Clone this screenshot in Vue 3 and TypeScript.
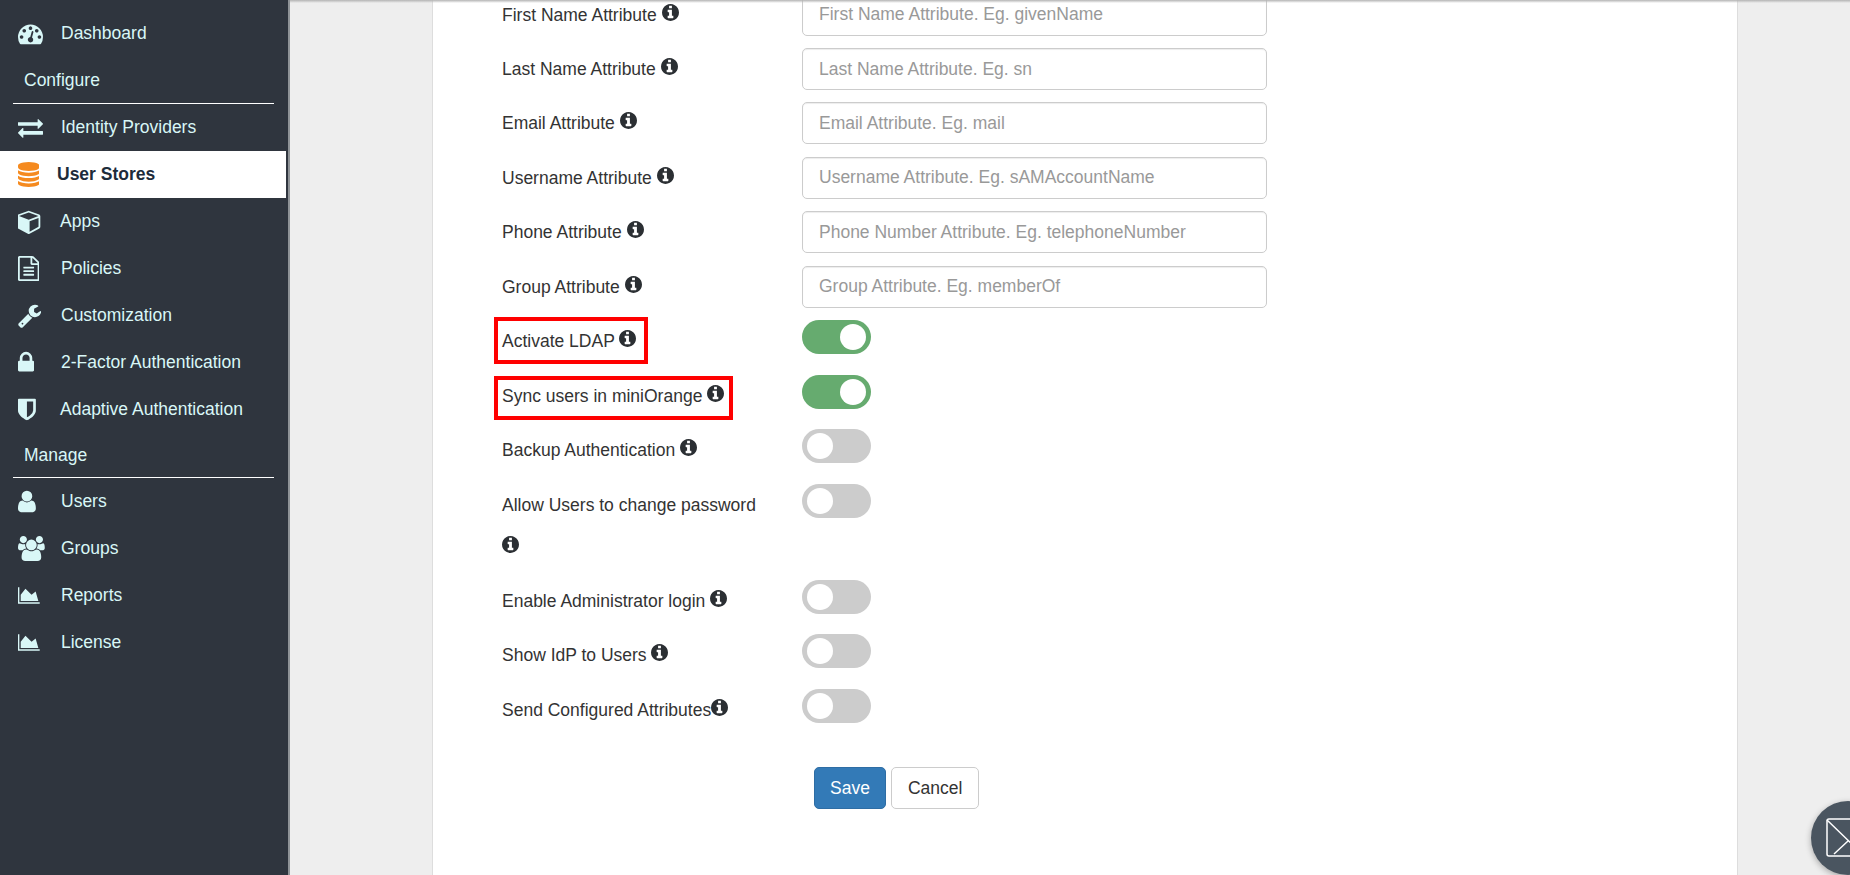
<script setup lang="ts">
import { reactive } from 'vue'

interface NavIcon { d: string; x: number; w: number; h?: number; color?: string }
interface NavItem { label: string; icon: NavIcon; cls?: string }

const I = {
  dash: { x: 0, w: 1792, d: 'M384 1152q0-53-37.5-90.5t-90.5-37.5-90.5 37.5-37.5 90.5 37.5 90.5 90.5 37.5 90.5-37.5 37.5-90.5zm192-448q0-53-37.5-90.5t-90.5-37.5-90.5 37.5-37.5 90.5 37.5 90.5 90.5 37.5 90.5-37.5 37.5-90.5zm428 481l101-382q6-26-7.5-48.5t-38.5-29.5-48 6.5-30 39.5l-101 382q-60 5-107 43.5t-63 98.5q-20 77 20 146t117 89 146-20 89-117q16-60-6-117t-72-91zm660-33q0-53-37.5-90.5t-90.5-37.5-90.5 37.5-37.5 90.5 37.5 90.5 90.5 37.5 90.5-37.5 37.5-90.5zm-640-640q0-53-37.5-90.5t-90.5-37.5-90.5 37.5-37.5 90.5 37.5 90.5 90.5 37.5 90.5-37.5 37.5-90.5zm448 192q0-53-37.5-90.5t-90.5-37.5-90.5 37.5-37.5 90.5 37.5 90.5 90.5 37.5 90.5-37.5 37.5-90.5zm320 448q0 261-141 483-19 29-54 29h-1402q-35 0-54-29-141-221-141-483 0-182 71-348t191-286 286-191 348-71 348 71 286 191 191 286 71 348z' },
  exchange: { x: 0, w: 1792, d: 'M1792 1184v192q0 13-9.5 22.5t-22.5 9.5h-1376v192q0 13-9.5 22.5t-22.5 9.5q-12 0-24-10l-319-320q-9-9-9-22 0-14 9-23l320-320q9-9 23-9 13 0 22.5 9.5t9.5 22.5v192h1376q13 0 22.5 9.5t9.5 22.5zm0-544q0 14-9 23l-320 320q-9 9-23 9-13 0-22.5-9.5t-9.5-22.5v-192h-1376q-13 0-22.5-9.5t-9.5-22.5v-192q0-13 9.5-22.5t22.5-9.5h1376v-192q0-14 9-23t23-9q12 0 24 10l319 319q9 9 9 23z' },
  db: { x: 0, w: 1536, color: '#f58a1f', d: 'M768 768q237 0 443-43t325-127v170q0 69-103 128t-280 93.5-385 34.5-385-34.5-280-93.5-103-128v-170q119 84 325 127t443 43zm0 768q237 0 443-43t325-127v170q0 69-103 128t-280 93.5-385 34.5-385-34.5-280-93.5-103-128v-170q119 84 325 127t443 43zm0-384q237 0 443-43t325-127v170q0 69-103 128t-280 93.5-385 34.5-385-34.5-280-93.5-103-128v-170q119 84 325 127t443 43zm0-1152q208 0 385 34.5t280 93.5 103 128v128q0 69-103 128t-280 93.5-385 34.5-385-34.5-280-93.5-103-128v-128q0-69 103-128t280-93.5 385-34.5z' },
  cube: { x: 64, w: 1664, d: 'M896 1629l640-349v-636l-640 233v752zm-64-865l698-254-698-254-698 254zm832-252v768q0 35-18 65t-49 47l-704 384q-28 16-61 16t-61-16l-704-384q-31-17-49-47t-18-65v-768q0-40 23-73t61-47l704-256q22-8 44-8t44 8l704 256q38 14 61 47t23 73z' },
  file: { x: 128, w: 1536, d: 'M1596 380q28 28 48 76t20 88v1152q0 40-28 68t-68 28h-1344q-40 0-68-28t-28-68v-1600q0-40 28-68t68-28h896q40 0 88 20t76 48zm-444-244v376h376q-10-29-22-41l-313-313q-12-12-41-22zm384 1528v-1024h-416q-40 0-68-28t-28-68v-416h-768v1536h1280zm-1024-864q0-14 9-23t23-9h704q14 0 23 9t9 23v64q0 14-9 23t-23 9h-704q-14 0-23-9t-9-23v-64zm736 224q14 0 23 9t9 23v64q0 14-9 23t-23 9h-704q-14 0-23-9t-9-23v-64q0-14 9-23t23-9h704zm0 256q14 0 23 9t9 23v64q0 14-9 23t-23 9h-704q-14 0-23-9t-9-23v-64q0-14 9-23t23-9h704z' },
  wrench: { x: 64, w: 1664, d: 'M448 1472q0-26-19-45t-45-19-45 19-19 45 19 45 45 19 45-19 19-45zm644-420l-682 682q-37 37-90 37-52 0-91-37l-106-108q-38-36-38-90 0-53 38-91l681-681q39 98 114.5 173.5t173.5 114.5zm634-435q0 39-23 106-47 134-164.5 217.5t-258.5 83.5q-185 0-316.5-131.5t-131.5-316.5 131.5-316.5 316.5-131.5q58 0 121.5 16.5t107.5 46.5q16 11 16 28t-16 28l-293 169v224l193 107q5-3 79-48.5t135.5-81 70.5-35.5q15 0 23.5 10t8.5 25z' },
  lock: { x: 320, w: 1152, d: 'M640 768h512v-192q0-106-75-181t-181-75-181 75-75 181v192zm832 96v576q0 40-28 68t-68 28h-960q-40 0-68-28t-28-68v-576q0-40 28-68t68-28h32v-192q0-184 132-316t316-132 316 132 132 316v192h32q40 0 68 28t28 68z' },
  shield: { x: 256, w: 1280, d: 'M1344 960v-640h-448v1137q119-63 213-137 235-184 235-360zm192-768v768q0 86-33.5 170.5t-83 150-118 127.5-126.5 103-121 77.5-89.5 49.5-42.5 20q-12 6-26 6t-26-6q-16-7-42.5-20t-89.5-49.5-121-77.5-126.5-103-118-127.5-83-150-33.5-170.5v-768q0-26 19-45t45-19h1152q26 0 45 19t19 45z' },
  user: { x: 256, w: 1280, d: 'M1536 1399q0 109-62.5 187t-150.5 78h-854q-88 0-150.5-78t-62.5-187q0-85 8.5-160.5t31.5-152 58.5-131 94-89 134.5-34.5q131 128 313 128t313-128q76 0 134.5 34.5t94 89 58.5 131 31.5 152 8.5 160.5zm-256-887q0 159-112.5 271.5t-271.5 112.5-271.5-112.5-112.5-271.5 112.5-271.5 271.5-112.5 271.5 112.5 112.5 271.5z' },
  users: { x: 0, w: 1920, d: 'M593 896q-162 5-265 128h-134q-82 0-138-40.5t-56-118.5q0-353 124-353 6 0 43.5 21t97.5 42.5 119 21.5q67 0 133-23-5 37-5 66 0 139 81 256zm1071 637q0 120-73 189.5t-194 69.5h-874q-121 0-194-69.5t-73-189.5q0-53 3.5-103.5t14-109 26.5-108.5 43-97.5 62-81 85.5-53.5 111.5-20q10 0 43 21.5t73 48 107 48 135 21.5 135-21.5 107-48 73-48 43-21.5q61 0 111.5 20t85.5 53.5 62 81 43 97.5 26.5 108.5 14 109 3.5 103.5zm-1024-1277q0 106-75 181t-181 75-181-75-75-181 75-181 181-75 181 75 75 181zm704 384q0 159-112.5 271.5t-271.5 112.5-271.5-112.5-112.5-271.5 112.5-271.5 271.5-112.5 271.5 112.5 112.5 271.5zm576 225q0 78-56 118.5t-138 40.5h-134q-103-123-265-128 81-117 81-256 0-29-5-66 66 23 133 23 59 0 119-21.5t97.5-42.5 43.5-21q124 0 124 353zm-128-609q0 106-75 181t-181 75-181-75-75-181 75-181 181-75 181 75 75 181z' },
  chart: { x: 0, w: 2048, h: 19, d: 'M2048 1536v128h-2048v-1536h128v1408h1920zm-384-1024l256 896h-1664v-576l448-576 576 576z' },
} satisfies Record<string, NavIcon>

const infoPath = 'M1152 1376v-160q0-14-9-23t-23-9h-96v-512q0-14-9-23t-23-9h-320q-14 0-23 9t-9 23v160q0 14 9 23t23 9h96v320h-96q-14 0-23 9t-9 23v160q0 14 9 23t23 9h448q14 0 23-9t9-23zm-128-896v-160q0-14-9-23t-23-9h-192q-14 0-23 9t-9 23v160q0 14 9 23t23 9h192q14 0 23-9t9-23zm640 416q0 209-103 385.5t-279.5 279.5-385.5 103-385.5-103-279.5-279.5-103-385.5 103-385.5 279.5-279.5 385.5-103 385.5 103 279.5 279.5 103 385.5z'

const top: NavItem[] = [{ label: 'Dashboard', icon: I.dash }]
const configure: NavItem[] = [
  { label: 'Identity Providers', icon: I.exchange },
  { label: 'User Stores', icon: I.db, cls: 'active' },
  { label: 'Apps', icon: I.cube, cls: 'tight' },
  { label: 'Policies', icon: I.file },
  { label: 'Customization', icon: I.wrench },
  { label: '2-Factor Authentication', icon: I.lock },
  { label: 'Adaptive Authentication', icon: I.shield, cls: 'tight' },
]
const manage: NavItem[] = [
  { label: 'Users', icon: I.user },
  { label: 'Groups', icon: I.users },
  { label: 'Reports', icon: I.chart },
  { label: 'License', icon: I.chart },
]

const inputs = [
  { label: 'First Name Attribute', ph: 'First Name Attribute. Eg. givenName' },
  { label: 'Last Name Attribute', ph: 'Last Name Attribute. Eg. sn' },
  { label: 'Email Attribute', ph: 'Email Attribute. Eg. mail' },
  { label: 'Username Attribute', ph: 'Username Attribute. Eg. sAMAccountName' },
  { label: 'Phone Attribute', ph: 'Phone Number Attribute. Eg. telephoneNumber' },
  { label: 'Group Attribute', ph: 'Group Attribute. Eg. memberOf' },
]

interface Toggle { label: string; on: boolean; mark?: string; tight?: boolean }
const toggles = reactive<Toggle[]>([
  { label: 'Activate LDAP', on: true, mark: 'mark-ldap' },
  { label: 'Sync users in miniOrange', on: true, mark: 'mark-sync' },
  { label: 'Backup Authentication', on: false },
  { label: 'Allow Users to change password', on: false },
  { label: 'Enable Administrator login', on: false },
  { label: 'Show IdP to Users', on: false },
  { label: 'Send Configured Attributes', on: false, tight: true },
])

const iconW = (i: NavIcon) => ((i.h ?? 25) * i.w) / 1792 + 'px'
const iconH = (i: NavIcon) => (i.h ?? 25) + 'px'
</script>

<template>
  <div class="page">
    <aside class="sidebar">
      <nav class="nav">
        <a v-for="n in top" :key="n.label" class="item" :class="n.cls">
          <span class="ico">
            <svg :viewBox="`${n.icon.x} 0 ${n.icon.w} 1792`" :style="{ width: iconW(n.icon), height: iconH(n.icon) }">
              <path :d="n.icon.d" :fill="n.icon.color ?? 'currentColor'" />
            </svg>
          </span>
          <span>{{ n.label }}</span>
        </a>
        <div class="section configure">Configure</div>
        <a v-for="n in configure" :key="n.label" class="item" :class="n.cls">
          <span class="ico">
            <svg :viewBox="`${n.icon.x} 0 ${n.icon.w} 1792`" :style="{ width: iconW(n.icon), height: iconH(n.icon) }">
              <path :d="n.icon.d" :fill="n.icon.color ?? 'currentColor'" />
            </svg>
          </span>
          <span>{{ n.label }}</span>
        </a>
        <div class="section manage">Manage</div>
        <a v-for="n in manage" :key="n.label" class="item" :class="n.cls">
          <span class="ico">
            <svg :viewBox="`${n.icon.x} 0 ${n.icon.w} 1792`" :style="{ width: iconW(n.icon), height: iconH(n.icon) }">
              <path :d="n.icon.d" :fill="n.icon.color ?? 'currentColor'" />
            </svg>
          </span>
          <span>{{ n.label }}</span>
        </a>
      </nav>
    </aside>

    <main class="main">
      <div class="topshade"></div>
      <section class="card">
        <form class="form" @submit.prevent>
          <div v-for="f in inputs" :key="f.label" class="row">
            <label class="lbl">{{ f.label }} <svg class="info" viewBox="128 128 1536 1536"><path :d="infoPath" /></svg></label>
            <input class="control" type="text" :placeholder="f.ph" />
          </div>
          <div v-for="t in toggles" :key="t.label" class="row">
            <label class="lbl" :class="{ marked: t.mark }">
              <span v-if="t.mark" class="mark" :class="t.mark"></span>{{ t.label }}<template v-if="!t.tight">{{ ' ' }}</template><svg class="info" viewBox="128 128 1536 1536"><path :d="infoPath" /></svg>
            </label>
            <label class="switch" :class="{ on: t.on }">
              <input v-model="t.on" type="checkbox" />
              <span class="knob"></span>
            </label>
          </div>
          <div class="actions">
            <button class="btn primary" type="submit">Save</button>
            <button class="btn cancel" type="button">Cancel</button>
          </div>
        </form>
      </section>
    </main>

    <button class="mail" type="button" aria-label="Contact">
      <svg viewBox="0 0 60 40" width="60" height="40">
        <rect x="1" y="1" width="58" height="37" rx="2" fill="none" stroke="#fff" stroke-width="1.5" />
        <path d="M1 2 L30 30 L59 2 M22 23 L8 36" fill="none" stroke="#fff" stroke-width="1.5" />
      </svg>
    </button>
  </div>
</template>

<style>
html, body { margin: 0; overflow: hidden; }
</style>

<style scoped>
.page {
  display: flex;
  height: 875px;
  overflow: hidden;
  font-family: "Liberation Sans", Arial, sans-serif;
  font-size: 17.5px;
  color: #333;
  background: #eee;
}
.sidebar {
  flex: 0 0 288px;
  background: #2f353e;
  color: #d9f7f7;
  border-right: 2px solid #8f9397;
}
.nav { padding-top: 10px; }
.item {
  display: flex;
  align-items: center;
  height: 47px;
  padding-left: 18px;
}
.ico { flex: 0 0 43px; display: flex; align-items: center; }
.ico svg { display: block; }
.item.tight span:last-child { margin-left: -1px; }
.item.active {
  background: #fff;
  color: #1d2b3a;
  width: 268px;
  font-weight: 700;
}
.item.active .ico { flex-basis: 39px; }
.section {
  margin: 0 14px 0 13px;
  padding-left: 11px;
  border-bottom: 1px solid #fff;
  color: #d9f7f7;
}
.configure { height: 46px; line-height: 46px; }
.manage { height: 44px; line-height: 44px; }

.main {
  position: relative;
  flex: 1;
  min-width: 0;
  overflow: hidden;
}
.topshade {
  position: absolute;
  top: 0;
  left: 0;
  right: 0;
  height: 3px;
  background: linear-gradient(#b4b4b4, rgba(200, 200, 200, 0));
  z-index: 2;
}
.card {
  display: flow-root;
  margin-left: 142px;
  width: 1306px;
  height: 100%;
  box-sizing: border-box;
  background: #fff;
  border-left: 1px solid #ddd;
  border-right: 1px solid #ddd;
  padding-left: 69px;
}
.form { margin-top: -6.4px; }
.row {
  display: flex;
  align-items: flex-start;
  margin-bottom: 12.44px;
}
.lbl {
  position: relative;
  flex: 0 0 270px;
  margin-right: 30px;
  line-height: 42px;
  color: #333;
}
.info {
  width: 17px;
  height: 17px;
  vertical-align: 0;
  fill: #2b2f33;
}
.control {
  box-sizing: border-box;
  width: 465px;
  height: 42px;
  padding: 0 16px;
  border: 1px solid #ccc;
  border-radius: 5px;
  font: inherit;
  color: #555;
  outline: none;
  box-shadow: inset 0 1px 1px rgba(0, 0, 0, 0.075);
}
.control::placeholder { color: #999; opacity: 1; }
.mark {
  position: absolute;
  left: -8px;
  border: 4px solid #f00;
  box-sizing: border-box;
  pointer-events: none;
}
.mark-ldap { top: -3px; width: 154px; height: 47px; }
.mark-sync { top: 1px; width: 239px; height: 44px; }
.switch {
  position: relative;
  display: block;
  width: 69px;
  height: 34px;
  border-radius: 17px;
  background: #ccc;
}
.switch.on { background: #66ab6f; }
.switch input { position: absolute; opacity: 0; width: 0; height: 0; }
.knob {
  position: absolute;
  top: 4px;
  left: 5px;
  width: 26px;
  height: 26px;
  border-radius: 50%;
  background: #fff;
}
.switch.on .knob { left: 38px; }
.actions {
  display: flex;
  gap: 5px;
  margin: 36.6px 0 0 312px;
}
.btn {
  height: 42px;
  padding: 0 15px;
  border: 1px solid #ccc;
  border-radius: 5px;
  background: #fff;
  color: #333;
  font: inherit;
}
.btn.cancel { padding: 0 16px; }
.btn.primary {
  background: #337ab7;
  border-color: #2e6da4;
  color: #fff;
}
.mail {
  position: fixed;
  left: 1811px;
  top: 801px;
  width: 74px;
  height: 74px;
  padding: 0 0 0 15px;
  border: 0;
  border-radius: 50%;
  background: #4a5560;
  box-shadow: 0 2px 6px rgba(0, 0, 0, 0.3);
  display: flex;
  align-items: center;
}
.mail svg { flex: none; }
</style>
